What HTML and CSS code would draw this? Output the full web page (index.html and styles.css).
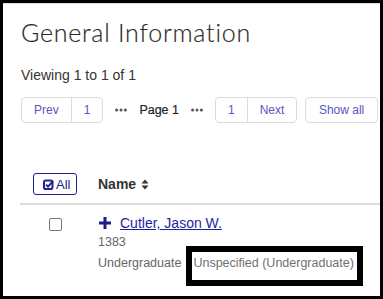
FILE: index.html
```html
<!DOCTYPE html>
<html lang="en">
<head>
<meta charset="utf-8">
<title>General Information</title>
<link rel="stylesheet" href="styles.css">
</head>
<body>
<div class="frame">
  <div class="page">
    <h1 class="title">General Information</h1>
    <p class="viewing">Viewing 1 to 1 of 1</p>
    <nav class="pager">
      <div class="btn-group"><a class="pg">Prev</a><a class="pg">1</a></div>
      <span class="dots"><svg width="12" height="4" viewBox="0 0 12 4"><circle cx="1.6" cy="2" r="1.5"/><circle cx="6" cy="2" r="1.5"/><circle cx="10.4" cy="2" r="1.5"/></svg></span>
      <span class="current">Page 1</span>
      <span class="dots"><svg width="12" height="4" viewBox="0 0 12 4"><circle cx="1.6" cy="2" r="1.5"/><circle cx="6" cy="2" r="1.5"/><circle cx="10.4" cy="2" r="1.5"/></svg></span>
      <div class="btn-group"><a class="pg">1</a><a class="pg">Next</a></div>
      <div class="btn-group show-all"><a class="pg">Show all</a></div>
    </nav>
    <div class="table">
      <div class="thead">
        <div class="c1">
          <button class="all-btn" type="button">
            <svg class="chk-ico" width="11" height="11" viewBox="0 0 11 11"><rect x="1" y="1.5" width="8.5" height="8.5" rx="1.8" fill="none" stroke="currentColor" stroke-width="2"/><path d="M3 5.6 L5 7.6 L10 2.2" fill="none" stroke="currentColor" stroke-width="2"/></svg>
            <span>All</span>
          </button>
        </div>
        <div class="c2 name-h">Name
          <svg class="sort" width="8" height="11" viewBox="0 0 8 11"><path d="M0.5 4.5 L4 0.5 L7.5 4.5 Z M0.5 6.5 L4 10.5 L7.5 6.5 Z" fill="#333"/></svg>
        </div>
      </div>
      <div class="row">
        <div class="c1"><span class="checkbox"></span></div>
        <div class="c2">
          <div class="name-line">
            <svg class="plus" width="12" height="12" viewBox="0 0 12 12"><path d="M6 0 V12 M0 6 H12" stroke="#1c1c8c" stroke-width="3"/></svg>
            <a class="person">Cutler, Jason W.</a>
          </div>
          <div class="detail">1383</div>
          <div class="detail detail-row"><span>Undergraduate</span><span class="hl">Unspecified (Undergraduate)</span></div>
        </div>
      </div>
    </div>
  </div>
</div>
</body>
</html>
```

FILE: styles.css
```css
html, body {
  margin: 0;
  padding: 0;
  background: #000;
}
.frame {
  width: 383px;
  height: 299px;
  box-sizing: border-box;
  border: 3px solid #000;
  background: #fff;
  overflow: hidden;
  font-family: "Liberation Sans", Arial, sans-serif;
  color: #333;
}
.page {
  border-top: 1px solid #dcdcdc;
  padding-left: 18px;
  height: 100%;
  box-sizing: border-box;
}
.title {
  margin: 13px 0 0;
  font-family: "Lato", sans-serif;
  font-weight: 300;
  font-size: 25px;
  line-height: 30px;
  color: #2a2a2a;
  letter-spacing: 0.75px;
  -webkit-text-stroke: 0.15px #2a2a2a;
}
.viewing {
  margin: 18px 0 0;
  font-size: 14px;
  line-height: 20px;
  color: #333;
}
.pager {
  margin-top: 12px;
  display: flex;
  align-items: center;
  gap: 12px;
  font-size: 12px;
}
.btn-group {
  display: flex;
  height: 26px;
  box-sizing: border-box;
  border: 1px solid #dcdcdc;
  border-radius: 4px;
}
.pg {
  display: flex;
  align-items: center;
  padding: 0 12px;
  color: #5b55c4;
}
.pg + .pg {
  border-left: 1px solid #dcdcdc;
}
.show-all {
  margin-left: -4px;
}
.show-all .pg {
  padding: 0 12.5px;
}
.dots {
  display: flex;
  fill: #555;
}
.current {
  color: #222;
  font-size: 12.5px;
  -webkit-text-stroke: 0.2px #222;
}
.table {
  margin-top: 50px;
  margin-left: -1px;
}
.thead, .row {
  display: grid;
  grid-template-columns: 70px 1fr;
  column-gap: 8px;
}
.thead {
  align-items: center;
  padding-bottom: 8px;
  border-bottom: 2px solid #dcdcdc;
}
.c1 {
  display: flex;
  justify-content: center;
}
.all-btn {
  display: flex;
  align-items: center;
  gap: 2px;
  height: 22px;
  width: 44px;
  box-sizing: border-box;
  padding: 0 0 0 9px;
  border: 1px solid #1f1f8f;
  border-radius: 3px;
  background: #fff;
  color: #22228e;
  font-family: "Liberation Sans", Arial, sans-serif;
  font-size: 13px;
}
.name-h {
  display: flex;
  align-items: center;
  gap: 5px;
  font-weight: bold;
  font-size: 14px;
  color: #333;
}
.row .c1 {
  align-self: start;
  padding-top: 13px;
  padding-left: 1px;
}
.checkbox {
  display: block;
  width: 13px;
  height: 13px;
  box-sizing: border-box;
  border: 1px solid #767676;
  border-radius: 2px;
  background: #fff;
}
.row .c2 {
  padding-top: 9px;
}
.name-line {
  display: flex;
  align-items: center;
  gap: 9px;
  height: 18px;
  font-size: 14px;
  line-height: 18px;
}
.plus {
  margin-left: 1px;
}
.person {
  color: #1f1f9c;
  text-decoration: underline;
}
.detail {
  font-size: 12.5px;
  line-height: 21px;
  color: #666;
}
.detail:first-of-type {
  margin-top: 1px;
}
.detail-row {
  display: flex;
  gap: 12px;
}
.hl {
  position: relative;
  color: #707070;
}
.hl::after {
  content: "";
  position: absolute;
  left: -7px;
  right: -9px;
  top: -7px;
  bottom: -12px;
  border: 6px solid #000;
}
```
